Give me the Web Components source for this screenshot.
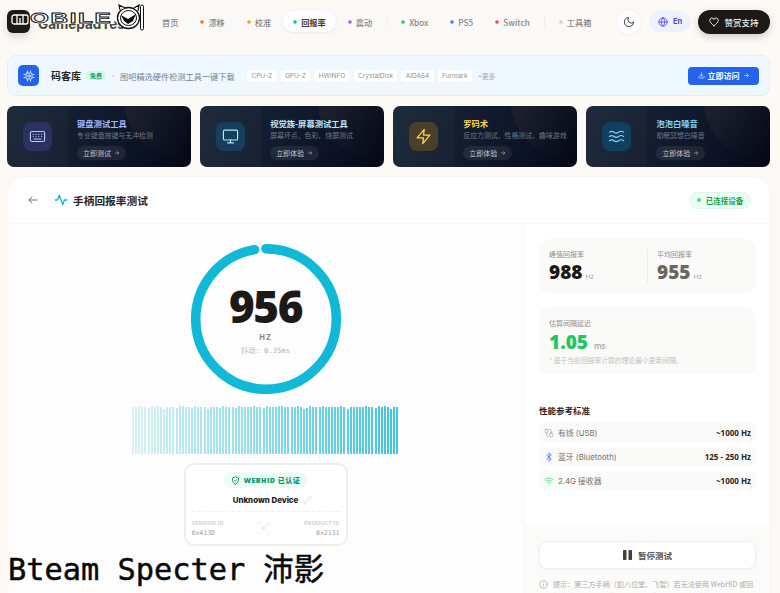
<!DOCTYPE html>
<html lang="zh">
<head>
<meta charset="utf-8">
<title>手柄回报率测试</title>
<style>
  html, body { margin: 0; height: 593px; overflow: hidden; }
  body {
    background: #fdfaf6;
    color: #1c1917;
    font-family: "Inter", "Noto Sans CJK SC", sans-serif;
    position: relative;
  }
  .wrap { display: flex; flex-direction: column; padding: 0 10px 0 7px; }
</style>
</head>
<body>
<div class="wrap">
  <top-bar>
    <nav-item>首页</nav-item>
    <nav-item dot="#f97316">漂移</nav-item>
    <nav-item dot="#f59e0b">校准</nav-item>
    <nav-item dot="#06b6d4" active>回报率</nav-item>
    <nav-item dot="#a855f7" sep>震动</nav-item>
    <nav-item dot="#22c55e">Xbox</nav-item>
    <nav-item dot="#3b82f6">PS5</nav-item>
    <nav-item dot="#ef4444" sep>Switch</nav-item>
    <nav-item dot="#d6d3d1">工具箱</nav-item>
  </top-bar>
  <promo-bar></promo-bar>
  <tool-row>
    <tool-card icon="keyboard" title="键盘测试工具" sub="专业键盘按键与无冲检测" cta="立即测试" tile="#2c3163" ink="#b9c5fb" head="#a5b4fc"></tool-card>
    <tool-card icon="monitor" title="视觉族-屏幕测试工具" sub="屏幕坏点、色彩、烧屏测试" cta="立即体验" tile="#153f5d" ink="#bae6fd" head="#bae6fd"></tool-card>
    <tool-card icon="bolt" title="罗码术" sub="反应力测试、性格测试、趣味游戏" cta="立即体验" tile="#4a3f2b" ink="#fcd34d" head="#fcd34d"></tool-card>
    <tool-card icon="waves" title="泡泡白噪音" sub="助眠冥想白噪音" cta="立即体验" tile="#10405f" ink="#7dd3fc" head="#7dd3fc"></tool-card>
  </tool-row>
  <test-panel>
    <rate-gauge slot="left" value="956" jitter="0.35"></rate-gauge>
    <rate-bars slot="left"></rate-bars>
    <device-card slot="left"></device-card>
    <side-stats slot="right"></side-stats>
  </test-panel>
</div>
<water-mark></water-mark>

<script>
const SANS = `"Inter", "Noto Sans CJK SC", sans-serif`;
const CJK = `"Noto Sans CJK SC", sans-serif`;
const NUM = `"Open Sans", "Noto Sans CJK SC", sans-serif`;
const MONO = `"DejaVu Sans Mono", "Noto Sans CJK SC", monospace`;

const stroke = (w = 2) => `fill="none" stroke="currentColor" stroke-width="${w}" stroke-linecap="round" stroke-linejoin="round"`;
const ICONS = {
  keyboard: `<svg viewBox="0 0 24 24" ${stroke(1.6)}><rect x="2" y="5" width="20" height="14" rx="2"/><path d="M6 9h.01M10 9h.01M14 9h.01M18 9h.01M6 12h.01M10 12h.01M14 12h.01M18 12h.01M7 15.5h10"/></svg>`,
  monitor: `<svg viewBox="0 0 24 24" ${stroke(1.6)}><rect x="2" y="3" width="20" height="14" rx="2"/><path d="M8 21h8M12 17v4"/></svg>`,
  bolt: `<svg viewBox="0 0 24 24" ${stroke(1.8)}><path d="M13 2 3 14h9l-1 8 10-12h-9z"/></svg>`,
  waves: `<svg viewBox="0 0 24 24" ${stroke(1.6)}><path d="M2 6c2.5-2 4-2 6.5 0s4 2 6.500 0 4.500-2 7 0M2 12c2.500-2 4-2 6.500 0s4 2 6.500 0 4.500-2 7 0M2 18c2.500-2 4-2 6.500 0s4 2 6.500 0 4.500-2 7 0"/></svg>`,
  arrow: `<svg viewBox="0 0 24 24" ${stroke(2)}><path d="M5 12h14M13 6l6 6-6 6"/></svg>`
};

class TopBar extends HTMLElement {
  connectedCallback() {
    if (this.shadowRoot) return;
    this.attachShadow({ mode: "open" }).innerHTML = `
      <style>
        :host { display: flex; align-items: center; height: 45px; margin-top: -1px; }
        .brand { width: 141px; flex: none; display: flex; align-items: center; gap: 8px; }
        .mark { width: 23px; height: 23px; flex: none; border-radius: 6px; background: #1c1917; box-shadow: 0 4px 8px rgba(0,0,0,.14); }
        .name { font: 700 13.500px ${SANS}; color: #4a4641; padding-top: 4px; white-space: nowrap; }
        nav { display: flex; align-items: center; gap: 2px; height: 30px; padding: 0 0 0 4px; border-radius: 15px; background: #faf9f7; box-sizing: border-box; width: 456px; }
        .theme { width: 24px; height: 24px; margin-left: 13px; border-radius: 50%; background: #fff; box-shadow: 0 0 0 1px #f3f1ee, 0 1px 3px rgba(0,0,0,.06); display: flex; align-items: center; justify-content: center; color: #44403c; }
        .theme svg { width: 12px; height: 12px; }
        .lang { width: 42px; height: 21px; margin-left: 8px; border-radius: 11px; background: #eef2ff; display: flex; align-items: center; justify-content: center; gap: 5px; font: 700 7.500px ${SANS}; color: #4f46e5; }
        .lang svg { width: 10px; height: 10px; }
        .love { width: 72px; height: 24px; margin-left: 7px; border-radius: 12px; background: #1c1917; color: #eeedec; display: flex; align-items: center; justify-content: center; gap: 5px; font: 500 8.500px ${CJK}; box-shadow: 0 3px 8px rgba(0,0,0,.18); }
        .love svg { width: 10px; height: 10px; }
      </style>
      <div class="brand"><div class="mark"></div><div class="name">GamepadTest</div></div>
      <nav><slot></slot></nav>
      <div class="theme"><svg viewBox="0 0 24 24" ${stroke(2)}><path d="M21 12.800A9 9 0 1 1 11.200 3 7 7 0 0 0 21 12.800z"/></svg></div>
      <div class="lang"><svg viewBox="0 0 24 24" ${stroke(2)}><circle cx="12" cy="12" r="10"/><path d="M2 12h20M12 2c3 3 4 6.500 4 10s-1 7-4 10c-3-3-4-6.500-4-10s1-7 4-10z"/></svg>En</div>
      <div class="love"><svg viewBox="0 0 24 24" ${stroke(2.200)}><path d="M12 21C5 15.500 2 12.500 2 8.500A5 5 0 0 1 12 6.500 5 5 0 0 1 22 8.500C22 12.500 19 15.500 12 21z"/></svg>赞赏支持</div>
    `;
  }
}
customElements.define("top-bar", TopBar);

class NavItem extends HTMLElement {
  connectedCallback() {
    if (this.shadowRoot) return;
    const dot = this.getAttribute("dot");
    this.attachShadow({ mode: "open" }).innerHTML = `
      <style>
        :host { display: flex; align-items: center; height: 21px; padding: 0 10px; gap: 4px; font: 500 8.200px ${CJK}; color: #8a8580; border-radius: 11px; white-space: nowrap; position: relative; }
        :host([active]) { background: #fff; color: #44403c; font-weight: 700; box-shadow: 0 1px 3px rgba(0,0,0,.07); }
        :host([sep]) { margin-right: 7px; }
        :host([sep])::after { content: ""; position: absolute; right: -5px; top: 5px; width: 1px; height: 11px; background: #f0eeec; }
        svg { width: 4px; height: 4px; flex: none; }
      </style>
      ${dot ? `<svg viewBox="0 0 4 4"><circle cx="2" cy="2" r="1.800" fill="${dot}"/></svg>` : ""}<slot></slot>
    `;
  }
}
customElements.define("nav-item", NavItem);

class PromoBar extends HTMLElement {
  connectedCallback() {
    if (this.shadowRoot) return;
    const tags = ["CPU-Z", "GPU-Z", "HWiNFO", "CrystalDisk", "AIDA64", "Furmark"];
    this.attachShadow({ mode: "open" }).innerHTML = `
      <style>
        :host { display: flex; align-items: center; height: 41px; margin-top: 11px; padding: 0 10px 0 10px; background: #eff8ff; border: 1px solid #e0f0fd; border-radius: 9px; box-sizing: border-box; }
        .ico { width: 21px; height: 21px; border-radius: 5px; background: #2563eb; color: #dbeafe; display: flex; align-items: center; justify-content: center; }
        .ico svg { width: 12px; height: 12px; }
        b { margin-left: 12px; font: 700 10px ${CJK}; color: #292524; }
        .free { margin-left: 5px; width: 20px; height: 9px; line-height: 9px; text-align: center; border-radius: 3px; background: #d1fae5; color: #059669; font: 700 6px/9px ${CJK}; }
        .sep { margin-left: 6px; width: 2px; height: 2px; border-radius: 50%; background: #cbd5e1; }
        .desc { margin-left: 6px; width: 127px; font: 400 8.200px ${CJK}; color: #78818c; white-space: nowrap; }
        .tags { display: flex; gap: 4px; }
        .tags span { height: 12px; line-height: 12px; padding: 0 4.400px; border-radius: 3px; background: #fff; font: 400 6.500px/12px ${SANS}; color: #8b929c; }
        .more { margin-left: 6px; font: 400 6.800px ${CJK}; color: #a0a8b2; }
        .go { margin-left: auto; width: 71px; height: 18px; border-radius: 4px; background: #2563eb; color: #fff; display: flex; align-items: center; justify-content: center; gap: 3px; font: 700 8px ${CJK}; }
        .go svg { width: 7px; height: 7px; opacity: .8; }
      </style>
      <div class="ico"><svg viewBox="0 0 24 24" ${stroke(2)}><rect x="6" y="6" width="12" height="12" rx="2"/><circle cx="12" cy="12" r="2.500"/><path d="M9 2v2M15 2v2M9 20v2M15 20v2M2 9h2M2 15h2M20 9h2M20 15h2"/></svg></div>
      <b>码客库</b><span class="free">免费</span><span class="sep"></span>
      <span class="desc">图吧精选硬件检测工具一键下载</span>
      <div class="tags">${tags.map(t => `<span>${t}</span>`).join("")}</div>
      <span class="more">+更多</span>
      <div class="go"><svg viewBox="0 0 24 24" ${stroke(2.500)}><path d="M21 15v4a2 2 0 0 1-2 2H5a2 2 0 0 1-2-2v-4M12 3v12M7 10l5 5 5-5"/></svg>立即访问<svg viewBox="0 0 24 24" ${stroke(2.500)}><path d="M5 12h14M13 6l6 6-6 6"/></svg></div>
    `;
  }
}
customElements.define("promo-bar", PromoBar);

class ToolRow extends HTMLElement {
  connectedCallback() {
    if (this.shadowRoot) return;
    this.attachShadow({ mode: "open" }).innerHTML = `
      <style>:host { display: grid; grid-template-columns: repeat(4, 1fr); gap: 9.500px; margin-top: 10px; }</style>
      <slot></slot>
    `;
  }
}
customElements.define("tool-row", ToolRow);

class ToolCard extends HTMLElement {
  connectedCallback() {
    if (this.shadowRoot) return;
    const a = n => this.getAttribute(n);
    this.attachShadow({ mode: "open" }).innerHTML = `
      <style>
        :host { display: flex; height: 61px; border-radius: 7px; overflow: hidden; position: relative; background: linear-gradient(115deg, #1a2638 0%, #10192b 55%, #040817 100%); }
        :host::before { content: ""; position: absolute; width: 110px; height: 110px; border-radius: 50%; right: -44px; top: -59px; background: linear-gradient(135deg, rgba(255,180,110,.1), rgba(255,180,110,0) 75%); }
        .strip { width: 61px; flex: none; display: flex; align-items: center; justify-content: center; background: rgba(255,255,255,.025); }
        .tile { width: 29px; height: 29px; border-radius: 8px; background: ${a("tile")}; color: ${a("ink")}; display: flex; align-items: center; justify-content: center; }
        .tile svg { width: 17px; height: 17px; }
        .body { padding: 12px 0 0 9px; position: relative; min-width: 0; }
        h3 { margin: 0; font: 700 8.300px/11px ${CJK}; color: ${a("head")}; white-space: nowrap; }
        p { margin: 1px 0 0; font: 400 6.900px/10px ${CJK}; color: #6f7785; white-space: nowrap; }
        .cta { display: inline-flex; align-items: center; gap: 3px; height: 14px; margin-top: 3px; padding: 0 6px; border-radius: 7px; background: rgba(255,255,255,.07); color: #c2c6cc; font: 400 7px ${CJK}; }
        .cta svg { width: 6px; height: 6px; }
      </style>
      <div class="strip"><div class="tile">${ICONS[a("icon")]}</div></div>
      <div class="body"><h3>${a("title")}</h3><p>${a("sub")}</p><span class="cta">${a("cta")}${ICONS.arrow}</span></div>
    `;
  }
}
customElements.define("tool-card", ToolCard);

class TestPanel extends HTMLElement {
  connectedCallback() {
    if (this.shadowRoot) return;
    this.attachShadow({ mode: "open" }).innerHTML = `
      <style>
        :host { display: block; margin-top: 10px; background: #fff; border-radius: 18px 18px 0 0; box-shadow: 0 0 0 1px #f8f5f0; }
        header { display: flex; align-items: center; height: 47px; padding: 0 19px 0 20px; border-bottom: 1px solid #f9f9f8; box-sizing: border-box; }
        .back { width: 12px; height: 12px; color: #78716c; }
        .pulse { width: 14px; height: 14px; margin-left: 15px; color: #06b6d4; }
        h1 { margin: 0 0 0 5px; font: 700 10.700px ${CJK}; color: #292524; }
        .ok { margin-left: auto; display: flex; align-items: center; justify-content: center; gap: 5px; width: 62px; height: 17px; border-radius: 9px; background: #ecfdf5; border: 1px solid #dcf8ea; box-sizing: border-box; font: 700 7.500px ${CJK}; color: #16a34a; }
        .ok i { width: 4px; height: 4px; border-radius: 50%; background: #4ade80; }
        .cols { display: flex; height: 400px; }
        .left { width: 517px; flex: none; display: flex; flex-direction: column; align-items: center; background: #fdfdfd; padding-top: 20px; box-sizing: border-box; }
        .right { flex: 1; min-width: 0; border-left: 1px solid #f7f7f5; }
      </style>
      <header>
        <svg class="back" viewBox="0 0 24 24" ${stroke(2)}><path d="M20 12H4M10 6l-6 6 6 6"/></svg>
        <svg class="pulse" viewBox="0 0 24 24" ${stroke(2.200)}><path d="M2 12h4l3-8 6 16 3-8h4"/></svg>
        <h1>手柄回报率测试</h1>
        <div class="ok"><i></i>已连接设备</div>
      </header>
      <div class="cols">
        <div class="left"><slot name="left"></slot></div>
        <div class="right"><slot name="right"></slot></div>
      </div>
    `;
  }
}
customElements.define("test-panel", TestPanel);

class RateGauge extends HTMLElement {
  connectedCallback() {
    if (this.shadowRoot) return;
    const v = this.getAttribute("value");
    const r = 70.300;
    const c = 2 * Math.PI * r;
    this.attachShadow({ mode: "open" }).innerHTML = `
      <style>
        :host { display: block; width: 150px; height: 150px; position: relative; }
        svg { display: block; transform: rotate(-90deg); }
        .in { position: absolute; inset: 0; display: flex; flex-direction: column; align-items: center; }
        .num { margin-top: 37px; font: 800 44px/50px ${NUM}; letter-spacing: -1.500px; color: #1c1917; }
        .hz { margin-top: 0; font: 700 8px/12px ${NUM}; letter-spacing: 1px; color: #8f8a85; }
        .jit { margin-top: 3px; font: 400 7.200px/10px ${MONO}; color: #b5b1ac; }
      </style>
      <svg width="150" height="150" viewBox="0 0 150 150">
        <circle cx="75" cy="75" r="${r}" fill="none" stroke="#f0f0ee" stroke-width="9.500"/>
        <circle cx="75" cy="75" r="${r}" fill="none" stroke="#06b6d4" stroke-opacity=".96" stroke-width="9.500" stroke-linecap="round" stroke-dasharray="${c * 0.972} ${c}"/>
      </svg>
      <div class="in">
        <div class="num">${v}</div>
        <div class="hz">HZ</div>
        <div class="jit">抖动: ${this.getAttribute("jitter")}ms</div>
      </div>
    `;
  }
}
customElements.define("rate-gauge", RateGauge);

class RateBars extends HTMLElement {
  connectedCallback() {
    if (this.shadowRoot) return;
    // heights read off the reference, repeating pattern is close enough
    const pattern = [47, 47, 48, 47, 47, 47, 48, 47, 47, 47, 47, 45, 47, 47, 48, 46, 47, 48, 47, 46];
    const n = 86;
    let bars = "";
    for (let i = 0; i < n; i++) {
      const h = pattern[(i * 7 + (i >> 3)) % pattern.length];
      bars += `<i style="height:${h}px;opacity:${(0.16 + 0.62 * i / (n - 1)).toFixed(2)}"></i>`;
    }
    this.attachShadow({ mode: "open" }).innerHTML = `
      <style>
        :host { display: flex; align-items: flex-end; justify-content: space-between; width: 267px; height: 48px; margin-top: 12px; }
        i { display: block; width: 2px; background: #06b6d4; }
      </style>
      ${bars}
    `;
  }
}
customElements.define("rate-bars", RateBars);

class DeviceCard extends HTMLElement {
  connectedCallback() {
    if (this.shadowRoot) return;
    this.attachShadow({ mode: "open" }).innerHTML = `
      <style>
        :host { display: flex; flex-direction: column; align-items: center; width: 164px; height: 83px; margin-top: 9px; padding: 7px 6px 0; background: #fff; border: 2px solid #eeeeec; border-radius: 10px; box-sizing: border-box; }
        .badge { display: flex; align-items: center; gap: 4px; height: 16px; padding: 0 8px; border-radius: 8px; background: #ecfdf5; font: 800 7px ${NUM}; letter-spacing: .5px; color: #059669; }
        .badge svg { width: 9px; height: 9px; }
        .name { display: flex; align-items: center; gap: 5px; margin: 5px 0 0 14px; height: 14px; font: 800 7.900px ${SANS}; color: #1c1917; }
        .name svg { width: 9px; height: 9px; color: #cfcdca; }
        .ids { display: flex; justify-content: space-between; align-items: center; align-self: stretch; margin-top: 4px; padding-top: 6px; border-top: 1px dashed #f1f0ee; }
        .ids > div { font: 700 5.800px/10px ${NUM}; color: #d4d2cf; }
        .ids > div:last-child { text-align: right; }
        .ids code { display: block; font: 400 6.500px/10px ${MONO}; color: #a29e99; }
        .ids svg { width: 15px; height: 15px; color: #e9e8e6; }
      </style>
      <div class="badge"><svg viewBox="0 0 24 24" ${stroke(2.400)}><path d="M12 22s8-4 8-10V5l-8-3-8 3v7c0 6 8 10 8 10z"/><path d="M9 12l2 2 4-4"/></svg>WEBHID 已认证</div>
      <div class="name">Unknown Device<svg viewBox="0 0 24 24" ${stroke(1.600)}><path d="M17 3a2.800 2.800 0 0 1 4 4L7.500 20.500 2 22l1.500-5.500z"/></svg></div>
      <div class="ids">
        <div>VENDOR ID<code>0x413D</code></div>
        <svg viewBox="0 0 24 24" ${stroke(1.600)}><path d="M3 7V5a2 2 0 0 1 2-2h2M17 3h2a2 2 0 0 1 2 2v2M21 17v2a2 2 0 0 1-2 2h-2M7 21H5a2 2 0 0 1-2-2v-2M9 8v8M15 8v8M12 10v4"/></svg>
        <div>PRODUCT ID<code>0x2131</code></div>
      </div>
    `;
  }
}
customElements.define("device-card", DeviceCard);

class SideStats extends HTMLElement {
  connectedCallback() {
    if (this.shadowRoot) return;
    this.attachShadow({ mode: "open" }).innerHTML = `
      <style>
        :host { display: flex; flex-direction: column; height: 100%; }
        .top { padding: 15px 14px 0; height: 301px; box-sizing: border-box; }
        .card { background: #fafaf8; border-radius: 10px; }
        .peak { display: flex; height: 54px; padding: 10px 10px 0; box-sizing: border-box; }
        .peak > div:first-child { width: 98px; flex: none; }
        .peak > div + div { height: 35px; border-left: 1px solid #efeeec; padding-left: 9px; }
        label { display: block; font: 400 7px/10px ${CJK}; color: #928d88; }
        .v { display: block; margin-top: 1px; font: 800 19px/24px ${NUM}; color: #1c1917; }
        .v small { font: 400 7px ${NUM}; color: #aaa6a1; margin-left: 3px; }
        .grey { color: #6b6560; }
        .lat { height: 67px; margin-top: 14px; padding: 11px 10px 0; box-sizing: border-box; }
        .lat .v { color: #22c55e; margin-top: 2px; }
        .lat .v small { font-size: 8px; margin-left: 6px; font-weight: 600; }
        .note { margin: 1px 0 0; font: 400 6.800px/10px ${CJK}; color: #c4c2bf; white-space: nowrap; }
        h2 { margin: 30px 0 0; font: 700 8.500px/12px ${CJK}; color: #292524; }
        .rows { display: flex; flex-direction: column; gap: 5px; margin-top: 7px; }
        ref-row { height: 19px; }
        .foot { flex: 1; background: #fbfbfa; padding: 16px 14px 0; box-sizing: border-box; }
        .pause { display: flex; align-items: center; justify-content: center; gap: 6px; height: 28px; background: #fff; border: 1px solid #f0efed; border-radius: 8px; box-sizing: border-box; box-shadow: 0 1px 3px rgba(0,0,0,.04); font: 700 8.500px ${CJK}; color: #57534e; }
        .pause svg { width: 9px; height: 10px; }
        .hint { display: flex; gap: 5px; margin-top: 9px; font: 400 7.100px/12px ${CJK}; color: #b0aca7; }
        .hint svg { width: 9px; height: 9px; flex: none; margin-top: 2px; color: #b0aca7; }
      </style>
      <div class="top">
        <div class="card peak">
          <div><label>峰值回报率</label><span class="v">988<small>Hz</small></span></div>
          <div><label>平均回报率</label><span class="v grey">955<small>Hz</small></span></div>
        </div>
        <div class="card lat">
          <label>估算间隔延迟</label>
          <span class="v">1.05<small>ms</small></span>
          <p class="note">* 基于当前回报率计算的理论最小更新间隔。</p>
        </div>
        <h2>性能参考标准</h2>
        <div class="rows">
          <ref-row icon="usb" value="~1000 Hz">有线 (USB)</ref-row>
          <ref-row icon="bt" value="125 - 250 Hz">蓝牙 (Bluetooth)</ref-row>
          <ref-row icon="wifi" value="~1000 Hz">2.4G 接收器</ref-row>
        </div>
      </div>
      <div class="foot">
        <div class="pause"><svg viewBox="0 0 9 10"><rect x="0" y="0" width="3.500" height="10" rx=".8" fill="#44403c"/><rect x="5.500" y="0" width="3.500" height="10" rx=".8" fill="#44403c"/></svg>暂停测试</div>
        <div class="hint"><svg viewBox="0 0 24 24" ${stroke(2)}><circle cx="12" cy="12" r="10"/><path d="M12 16v-4M12 8h.01"/></svg><span>提示：第三方手柄（如八位堂、飞智）若无法使用 WebHID 或回报率读取，可以切换至 Polling 模式（需开始键按键）。</span></div>
      </div>
    `;
  }
}
customElements.define("side-stats", SideStats);

class RefRow extends HTMLElement {
  connectedCallback() {
    if (this.shadowRoot) return;
    const icons = {
      usb: `<svg viewBox="0 0 24 24" ${stroke(1.600)} style="color:#a8a4a0"><rect x="3" y="3" width="7" height="9" rx="2"/><rect x="14" y="12" width="7" height="9" rx="2"/><path d="M6.500 12v5a4 4 0 0 0 4 4M17.500 12V7a4 4 0 0 0-4-4"/></svg>`,
      bt: `<svg viewBox="0 0 24 24" ${stroke(2)} style="color:#3b82f6"><path d="M6.500 7l11 10-5.500 5V2l5.500 5-11 10"/></svg>`,
      wifi: `<svg viewBox="0 0 24 24" ${stroke(2)} style="color:#4ade80"><path d="M2 8.800a15 15 0 0 1 20 0M5 12.500a10 10 0 0 1 14 0M8.500 16a5 5 0 0 1 7 0M12 20h.01"/></svg>`
    };
    this.attachShadow({ mode: "open" }).innerHTML = `
      <style>
        :host { display: flex; align-items: center; padding: 0 5px; background: #fafaf8; border-radius: 5px; font: 400 7.800px ${SANS}; color: #78716c; }
        svg { width: 10px; height: 10px; margin-right: 4px; }
        b { margin-left: auto; font: 700 8px ${NUM}; color: #292524; }
      </style>
      ${icons[this.getAttribute("icon")]}<slot></slot><b>${this.getAttribute("value")}</b>
    `;
  }
}
customElements.define("ref-row", RefRow);

// logo watermark and the uploader's caption lying over the shot
class WaterMark extends HTMLElement {
  connectedCallback() {
    if (this.shadowRoot) return;
    this.attachShadow({ mode: "open" }).innerHTML = `
      <style>
        :host { position: absolute; inset: 0; display: block; pointer-events: none; }
        .m { position: absolute; left: 11px; top: 14px; width: 18px; height: 11px; }
        .word { position: absolute; left: 30px; top: 12px; padding-right: 1px; background: #fdfbf8; font: 700 15px/11.500px "Liberation Sans", sans-serif; color: #fff; -webkit-text-stroke: .8px #111; letter-spacing: 1px; transform-origin: 0 0; transform: scaleX(1.620); white-space: nowrap; }
        .cat { position: absolute; left: 116px; top: 4px; width: 28px; height: 27px; }
        .cap { position: absolute; left: 8px; top: 550px; font: 400 30.300px/40px ${MONO}; -webkit-text-stroke: .5px #0a0a0a; color: #0a0a0a; white-space: pre; }
      </style>
      <svg class="m" viewBox="0 0 18 11" fill="none" stroke="#fff" stroke-width="1.300"><rect x="1" y="1" width="16" height="9" rx="2"/><path d="M6 1v9M9 4v6M12 1v9"/></svg>
      <div class="word">OBILE</div>
      <svg class="cat" viewBox="0 0 28 27">
        <ellipse cx="12.500" cy="14" rx="11" ry="10.500" fill="#fff" stroke="#111" stroke-width="1.300"/>
        <ellipse cx="12.500" cy="14" rx="8" ry="7.500" fill="none" stroke="#111" stroke-width="1"/>
        <path d="M5 11l7 4 8-5-3 7-5 3-4-3z" fill="#111"/>
        <path d="M4 6 3 1l6 3M18 4l5-3-1 6" fill="#fff" stroke="#111" stroke-width="1.200"/>
        <rect x="24.500" y="1" width="3" height="25" rx="1.500" fill="#fff" stroke="#111"/>
      </svg>
      <div class="cap">Bteam Specter 沛影</div>
    `;
  }
}
customElements.define("water-mark", WaterMark);
</script>
</body>
</html>
